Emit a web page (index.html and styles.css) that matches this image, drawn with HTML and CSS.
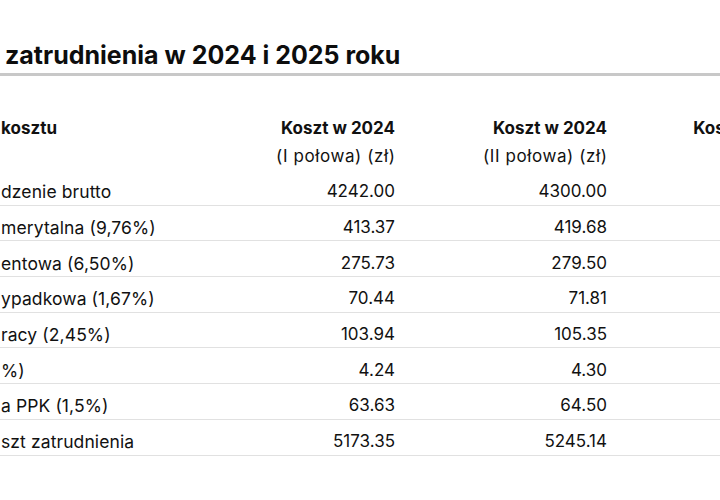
FILE: index.html
```html
<!DOCTYPE html>
<html lang="pl">
<head>
<meta charset="utf-8">
<title>Koszt zatrudnienia</title>
<link rel="stylesheet" href="styles.css">
</head>
<body>
<div class="viewport">
  <h2 class="title">zatrudnienia w 2024 i 2025 roku</h2>
  <div class="table">
    <div class="row head">
      <div class="label">kosztu</div>
      <div class="val"><b>Koszt w 2024</b><span class="sub">(I połowa) (zł)</span></div>
      <div class="val"><b>Koszt w 2024</b><span class="sub">(II połowa) (zł)</span></div>
      <div class="val"><b>Koszt w 2025</b></div>
    </div>
    <div class="row">
      <div class="label">dzenie brutto</div>
      <div class="val">4242.00</div>
      <div class="val">4300.00</div>
    </div>
    <div class="row">
      <div class="label">merytalna (9,76%)</div>
      <div class="val">413.37</div>
      <div class="val">419.68</div>
    </div>
    <div class="row">
      <div class="label">entowa (6,50%)</div>
      <div class="val">275.73</div>
      <div class="val">279.50</div>
    </div>
    <div class="row">
      <div class="label">ypadkowa (1,67%)</div>
      <div class="val">70.44</div>
      <div class="val">71.81</div>
    </div>
    <div class="row">
      <div class="label">racy (2,45%)</div>
      <div class="val">103.94</div>
      <div class="val">105.35</div>
    </div>
    <div class="row">
      <div class="label">%)</div>
      <div class="val">4.24</div>
      <div class="val">4.30</div>
    </div>
    <div class="row">
      <div class="label">a PPK (1,5%)</div>
      <div class="val">63.63</div>
      <div class="val">64.50</div>
    </div>
    <div class="row">
      <div class="label">szt zatrudnienia</div>
      <div class="val">5173.35</div>
      <div class="val">5245.14</div>
    </div>
  </div>
</div>
</body>
</html>
```

FILE: styles.css
```css
html, body {
  margin: 0;
  padding: 0;
  background: #ffffff;
  overflow: hidden;
}
body {
  font-family: "Inter", "Open Sans", sans-serif;
  color: #111111;
}
.viewport {
  width: 720px;
  height: 500px;
  overflow: hidden;
}
.title {
  margin: 0;
  padding: 39px 0 1px 5px;
  font-size: 25px;
  font-weight: 700;
  line-height: 33px;
  color: #0d0d0d;
  border-bottom: 3px solid #c8c8c8;
  width: 900px;
}
.table {
  width: 900px;
  margin-top: 39px;
  font-size: 17px;
}
.row {
  display: grid;
  grid-template-columns: 260px 135px 212px 200px 1fr;
  box-sizing: border-box;
  height: 35.7px;
  padding-top: 8.2px;
  line-height: 27.5px;
  border-bottom: 1px solid #e1e1e1;
}
.row.head {
  height: auto;
  padding-top: 0;
  border-bottom: none;
}
.label {
  padding-left: 1px;
  white-space: nowrap;
  font-size: 17.5px;
  letter-spacing: 0.1px;
}
.head .label {
  font-weight: 700;
  font-size: 17px;
  letter-spacing: 0;
}
.val {
  text-align: right;
  white-space: nowrap;
}
.head .val {
  display: flex;
  flex-direction: column;
  align-items: flex-end;
}
.head b {
  font-weight: 700;
}
.sub {
  letter-spacing: 0.6px;
  margin-right: -0.6px;
}
```
